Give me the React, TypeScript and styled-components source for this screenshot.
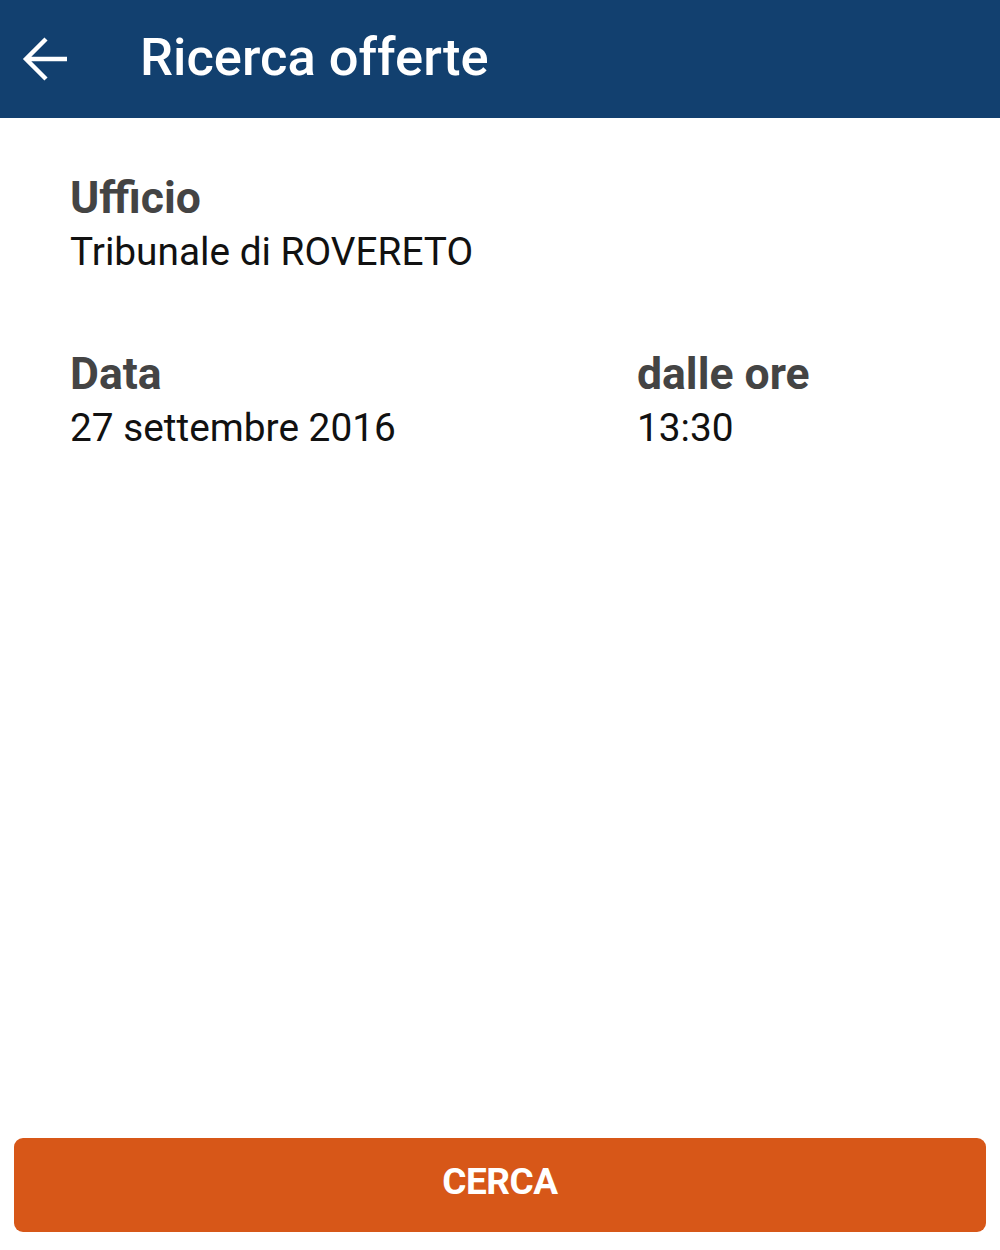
import React from "react";
import styled, { createGlobalStyle } from "styled-components";

const Global = createGlobalStyle`
  html, body { margin: 0; padding: 0; background: #ffffff; }
  body { font-family: Roboto, "Noto Sans", sans-serif; }
  #root { width: 1000px; height: 1250px; }
`;

const Screen = styled.div`
  width: 1000px;
  height: 1250px;
  display: flex;
  flex-direction: column;
  background: #ffffff;
`;

const AppBar = styled.header`
  height: 118px;
  background: #12406f;
  display: flex;
  align-items: center;
  padding-left: 22px;
  box-sizing: border-box;
`;

const BackButton = styled.button`
  width: 46px;
  height: 46px;
  padding: 0;
  border: none;
  background: transparent;
  display: flex;
  align-items: center;
  justify-content: center;
  margin-right: 72px;
`;

const Title = styled.h1`
  margin: 0;
  color: #ffffff;
  font-family: Roboto, sans-serif;
  font-weight: 500;
  font-size: 52.5px;
  line-height: 1;
  margin-top: -4px;
`;

const Content = styled.main`
  flex: 1;
  padding: 54px 70px 0;
  display: flex;
  flex-direction: column;
  gap: 70px;
`;

const Row = styled.div`
  display: grid;
  grid-template-columns: 567px 1fr;
`;

const Field = styled.div`
  display: flex;
  flex-direction: column;
`;

const Label = styled.div`
  color: #444444;
  font-family: Roboto, sans-serif;
  font-weight: 700;
  font-size: 44.5px;
  line-height: 52px;
`;

const Value = styled.div`
  color: #111111;
  font-family: Roboto, sans-serif;
  font-weight: 400;
  font-size: 38.8px;
  line-height: 52px;
  margin-top: 2px;
`;

const Footer = styled.footer`
  padding: 0 14px 18px;
`;

const PrimaryButton = styled.button`
  width: 100%;
  height: 94px;
  border: none;
  border-radius: 9px;
  background: #d75718;
  color: #ffffff;
  font-family: Roboto, sans-serif;
  font-weight: 700;
  font-size: 37px;
  letter-spacing: -0.5px;
  padding: 0 0 8px;
`;

const ArrowIcon = () => (
  <svg width="46" height="46" viewBox="0 0 46 46">
    <path
      d="M45 23H4M24 3L4 23l20 20"
      fill="none"
      stroke="#ffffff"
      strokeWidth="4.4"
    />
  </svg>
);

export default function App() {
  return (
    <Screen>
      <Global />
      <AppBar>
        <BackButton aria-label="Indietro">
          <ArrowIcon />
        </BackButton>
        <Title>Ricerca offerte</Title>
      </AppBar>
      <Content>
        <Field>
          <Label>Ufficio</Label>
          <Value>Tribunale di ROVERETO</Value>
        </Field>
        <Row>
          <Field>
            <Label>Data</Label>
            <Value>27 settembre 2016</Value>
          </Field>
          <Field>
            <Label>dalle ore</Label>
            <Value>13:30</Value>
          </Field>
        </Row>
      </Content>
      <Footer>
        <PrimaryButton>CERCA</PrimaryButton>
      </Footer>
    </Screen>
  );
}
